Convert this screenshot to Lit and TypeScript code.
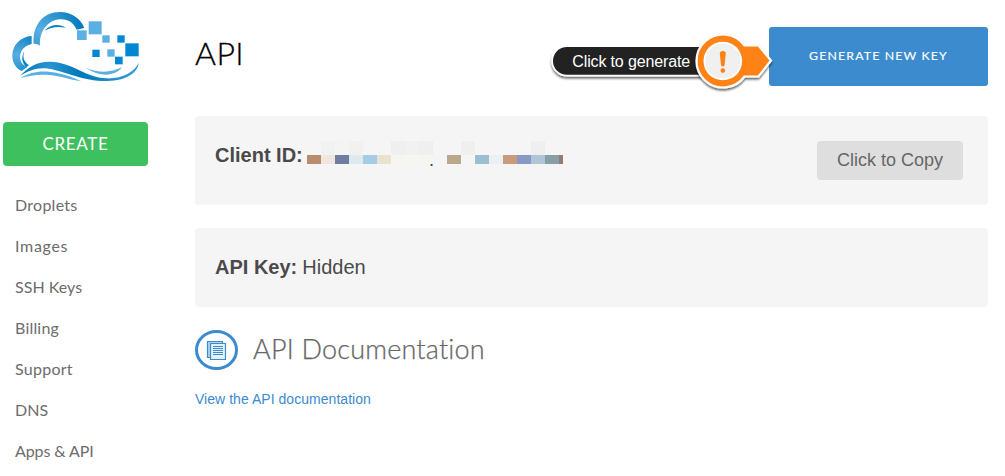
import { LitElement, html, css, svg } from "lit";
import { customElement } from "lit/decorators.js";

const NAV: [string, string][] = [
  ["Droplets", "0.27px"],
  ["Images", "0.7px"],
  ["SSH Keys", "0.03px"],
  ["Billing", "0.2px"],
  ["Support", "0.25px"],
  ["DNS", "0px"],
  ["Apps & API", "-0.1px"],
];

/* Squares drifting off the cloud: x, y, width, height, colour */
const LOGO_SQUARES: [number, number, number, number, string][] = [
  [266, 64, 39, 39, "#5aafe3"],
  [231, 91, 29, 29, "#5aafe3"],
  [307, 106, 22, 22, "#5aafe3"],
  [352, 106, 22, 22, "#0087d1"],
  [376, 130, 40, 39, "#0087d1"],
  [322, 148, 22, 22, "#5aafe3"],
  [277, 149, 22, 22, "#0087d1"],
  [345, 170, 23, 23, "#0087d1"],
];

/* Redaction mosaic: x, y, width, height, colour */
const MOSAIC: [number, number, number, number, string][] = [
  [14, 0, 14, 14, "#eff2f1"],
  [28, 0, 14, 14, "#f4f4f4"],
  [42, 0, 14, 14, "#f1f1ef"],
  [84, 0, 14, 14, "#efefef"],
  [98, 0, 14, 14, "#f1f1f1"],
  [112, 0, 14, 14, "#efefef"],
  [154, 0, 14, 14, "#efefef"],
  [224, 0, 14, 14, "#efefef"],
  [0, 14, 14, 9, "#b78c6f"],
  [14, 14, 14, 9, "#f0e6dd"],
  [28, 14, 14, 9, "#707da1"],
  [42, 14, 14, 9, "#dde9ef"],
  [56, 14, 14, 9, "#a5cce4"],
  [70, 14, 14, 9, "#e9e2d0"],
  [84, 14, 42, 9, "#f5f5f2"],
  [140, 14, 14, 9, "#bba88b"],
  [168, 14, 14, 9, "#9dbdd2"],
  [182, 14, 14, 9, "#eaf0f4"],
  [196, 14, 14, 9, "#c79b7c"],
  [210, 14, 14, 9, "#8998c5"],
  [224, 14, 14, 9, "#b0c5d8"],
  [238, 14, 14, 9, "#889fa6"],
  [252, 14, 4, 9, "#957c73"],
  [123, 23, 1, 2, "#e5b04a"],
  [124, 23, 1, 2, "#43405c"],
  [125, 23, 1, 2, "#62aee0"],
];

const rects = (list: [number, number, number, number, string][]) =>
  list.map(
    ([x, y, w, h, c]) =>
      svg`<rect x=${x} y=${y} width=${w} height=${h} fill=${c}></rect>`
  );

@customElement("app-root")
export class AppRoot extends LitElement {
  static styles = css`
    :host {
      display: block;
      height: 476px;
      overflow: hidden;
      background: #fff;
      font-family: "Liberation Sans", Arial, sans-serif;
      font-variant-ligatures: none;
    }
    * {
      box-sizing: border-box;
    }
    svg {
      display: block;
    }
    .page {
      display: grid;
      grid-template-columns: 195px 793px;
      height: 476px;
    }
    .logo {
      height: 95px;
    }
    .create {
      display: block;
      width: 145px;
      height: 44px;
      margin: 27px 0 0 3px;
      padding: 0;
      border: 0;
      border-radius: 4px;
      background: #3fc05f;
      color: #fff;
      font: 400 17px/44px Lato, sans-serif;
      letter-spacing: 0.65px;
      text-align: center;
    }
    .nav {
      margin: 18px 0 0;
      padding: 0 0 0 15px;
      list-style: none;
      color: #6c6c6c;
      font: 400 16px/41px Lato, sans-serif;
    }
    .nav li {
      height: 41px;
      white-space: nowrap;
    }
    .head {
      display: flex;
      justify-content: space-between;
      height: 89px;
      padding-top: 27px;
      margin-bottom: 27px;
      position: relative;
    }
    h1 {
      margin: 0;
      color: #000;
      font: 300 32px/52px Lato, sans-serif;
      letter-spacing: 0.4px;
      -webkit-text-stroke: 0.3px #000;
    }
    .generate {
      width: 219px;
      height: 59px;
      padding: 0;
      border: 0;
      border-radius: 3px;
      background: #3b8bce;
      color: #fff;
      font: 400 12.3px/58px Lato, sans-serif;
      letter-spacing: 1.15px;
      -webkit-text-stroke: 0.15px #fff;
      text-align: center;
    }
    .generate span {
      display: block;
      height: 59px;
    }
    .callout {
      position: absolute;
      left: 345px;
      top: 20px;
    }
    .panel {
      display: flex;
      justify-content: space-between;
      border-radius: 4px;
      background: #f5f5f5;
      color: #4a4a4a;
      font-size: 20px;
      line-height: 24px;
      padding-left: 20px;
    }
    .client {
      height: 89px;
      padding-top: 25px;
      padding-right: 25px;
    }
    .key {
      height: 79px;
      margin-top: 23px;
      padding-top: 27px;
    }
    .value {
      display: flex;
      gap: 5px;
    }
    .client .value {
      gap: 4px;
    }
    .client .value b {
      margin-top: 2px;
    }
    .copy {
      width: 146px;
      height: 39px;
      padding: 0;
      border: 0;
      border-radius: 4px;
      background: #dedede;
      color: #666;
      font: 400 18px/37px "Liberation Sans", Arial, sans-serif;
      text-align: center;
    }
    .docs {
      display: flex;
      gap: 15px;
      height: 41px;
      margin-top: 23px;
    }
    h2 {
      margin: 0;
      color: #666;
      font: 300 27px/37px Lato, sans-serif;
      letter-spacing: 0.2px;
      -webkit-text-stroke: 0.25px #666;
      white-space: nowrap;
    }
    .link {
      display: block;
      margin-top: 18px;
      color: #3b8bce;
      font-size: 14px;
      line-height: 20px;
      letter-spacing: 0.04px;
      text-decoration: none;
    }
  `;

  private logo() {
    return svg`
      <svg width="150" height="95" viewBox="0 0 450 285">
        <defs>
          <radialGradient id="arc" gradientUnits="userSpaceOnUse" cx="118" cy="92" r="130">
            <stop offset="0" stop-color="#5aafe3"></stop>
            <stop offset="1" stop-color="#0079bd"></stop>
          </radialGradient>
          <radialGradient id="side" gradientUnits="userSpaceOnUse" cx="52" cy="165" r="85">
            <stop offset="0" stop-color="#5aafe3"></stop>
            <stop offset="1" stop-color="#0079bd"></stop>
          </radialGradient>
          <linearGradient id="wave" x1="0" x2="1" y1="0" y2="0">
            <stop offset="0" stop-color="#0079bd"></stop>
            <stop offset=".25" stop-color="#2c93d0"></stop>
            <stop offset=".5" stop-color="#0079bd"></stop>
            <stop offset="1" stop-color="#3a9ed8"></stop>
          </linearGradient>
        </defs>
        <path fill="url(#arc)" d="M101 131C97 75 130 36 180 36C216 36 243 57 253 84L230 89C219 66 202 56 179 58C143 61 117 94 120 137C115 132 108 131 101 131Z"></path>
        <path fill="#0b80c3" d="M133 92C150 73 178 70 197 83C172 78 153 81 133 92Z"></path>
        <path fill="url(#side)" d="M95 108V132C69 138 57 157 61 178C63 190 70 196 82 201L65 213C48 205 37 188 37 167C37 136 61 110 95 108Z"></path>
        <path fill="#0b80c3" d="M73 154C66 174 73 186 87 196L79 201C65 189 63 170 73 154Z"></path>
        <path fill="url(#wave)" d="M61 228C84 199 115 184 150 185C219 187 255 232 319 235C367 237 401 217 416 189C414 219 377 242 323 243C246 244 203 215 146 206C112 201 86 211 61 228Z"></path>
        <path fill="#5aafe3" d="M61 235C89 217 119 212 151 216C188 220 216 231 244 244C207 238 182 228 149 225C116 222 89 226 61 235Z"></path>
        <path fill="#5aafe3" d="M257 203C296 220 333 218 366 202C345 230 299 232 257 203Z"></path>
        ${rects(LOGO_SQUARES)}
      </svg>`;
  }

  private callout() {
    return svg`
      <svg class="callout" width="240" height="80" viewBox="0 0 240 80">
        <defs>
          <filter id="shadow" x="-10%" y="-20%" width="120%" height="150%">
            <feDropShadow dx="0" dy="2" stdDeviation="1.3" flood-color="#000" flood-opacity=".6"></feDropShadow>
          </filter>
        </defs>
        <g filter="url(#shadow)">
          <rect x="11.300" y="25.300" width="170" height="31.200" rx="15.600" fill="#fff"></rect>
          <rect x="13" y="27" width="166" height="27.800" rx="13.900" fill="#222"></rect>
        </g>
        <g filter="url(#shadow)">
          <path fill="#ff8214" stroke="#fff" stroke-width="2.200" d="M204.500 25.500H218.500L231 40.500L218.500 56.500H204.500A26.500 26.500 0 1 1 204.500 25.500Z"></path>
        </g>
        <circle cx="182.800" cy="41" r="19.300" fill="#fff"></circle>
        <circle cx="182.800" cy="41" r="17.400" fill="#f0f0f0"></circle>
        <path fill="#ff8214" d="M179.800 33.500Q179.800 31 182.800 31Q185.800 31 185.800 33.500L184.600 45Q184.300 46.500 182.800 46.500Q181.300 46.500 181 45Z"></path>
        <circle cx="182.800" cy="50.600" r="2.300" fill="#ff8214"></circle>
        <text x="32.300" y="47" fill="#fff" font-family="Liberation Sans, Arial, sans-serif" font-size="16" letter-spacing="-0.14">Click to generate</text>
      </svg>`;
  }

  private docIcon() {
    return svg`
      <svg width="43" height="41" viewBox="0 0 43 41">
        <ellipse cx="21.500" cy="20" rx="20" ry="18.500" fill="#fff" stroke="#3b8bce" stroke-width="3"></ellipse>
        <g fill="none" stroke="#3b8bce" stroke-width="1.200">
          <path fill="#b5d3ec" d="M15.500 27.500H12.500V11.500H27.500V13.500"></path>
          <path fill="#e4f0fa" d="M15.500 13.500H30.500V29.500H15.500Z"></path>
          <path d="M18 16.500H28M18 18.500H28M18 20.500H28M18 22.500H28M18 24.500H28"></path>
        </g>
      </svg>`;
  }

  render() {
    return html`
      <div class="page">
        <aside>
          <div class="logo">${this.logo()}</div>
          <button class="create">CREATE</button>
          <ul class="nav">
            ${NAV.map(
              ([label, spacing]) =>
                html`<li style="letter-spacing:${spacing}">${label}</li>`
            )}
          </ul>
        </aside>
        <main>
          <header class="head">
            <h1>API</h1>
            <button class="generate"><span>GENERATE NEW KEY</span></button>
            ${this.callout()}
          </header>
          <section class="panel client">
            <div class="value">
              <b>Client ID:</b>
              <svg width="256" height="25" viewBox="0 0 256 25" shape-rendering="crispEdges">${rects(MOSAIC)}</svg>
            </div>
            <button class="copy">Click to Copy</button>
          </section>
          <section class="panel key">
            <div class="value"><b>API Key:</b><span>Hidden</span></div>
          </section>
          <div class="docs">${this.docIcon()}<h2>API Documentation</h2></div>
          <a class="link">View the API documentation</a>
        </main>
      </div>
    `;
  }
}
